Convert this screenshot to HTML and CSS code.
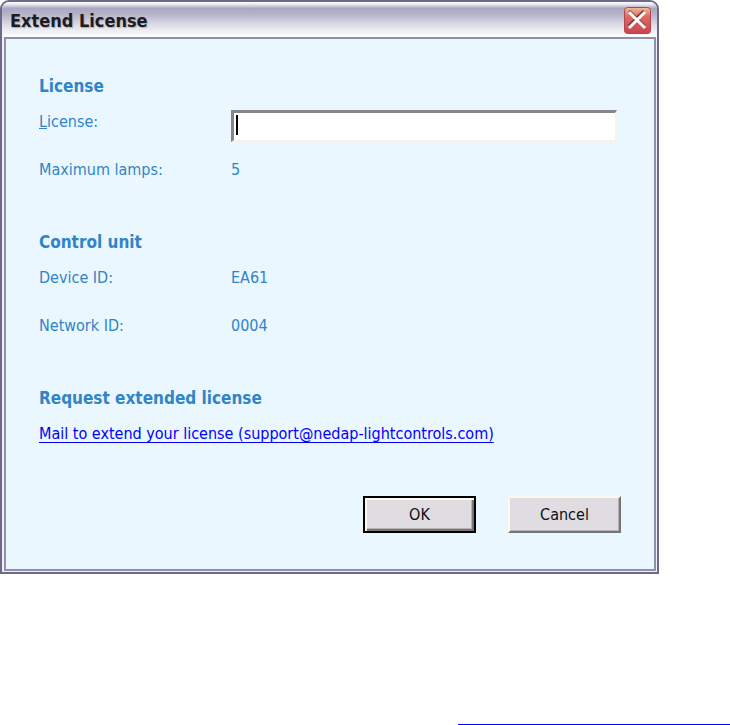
FILE: index.html
```html
<!DOCTYPE html>
<html lang="en">
<head>
  <meta charset="utf-8">
  <title>Extend License</title>
  <link rel="stylesheet" href="styles.css">
</head>
<body>
  <form class="dialog">
    <div class="titlebar">
      <h1>Extend License</h1>
      <button type="button" class="close" aria-label="Close">
        <svg viewBox="0 0 27 27" width="27" height="27">
          <defs>
            <linearGradient id="red" x1="0" y1="0" x2="0" y2="1">
              <stop offset="0" stop-color="#f2bd9c"/>
              <stop offset=".35" stop-color="#dc6a62"/>
              <stop offset="1" stop-color="#c94450"/>
            </linearGradient>
          </defs>
          <rect x="0.5" y="0.5" width="26" height="26" rx="3" fill="url(#red)" stroke="#b5434c"/>
          <path d="M5 4L20 19M20 4L5 19" stroke="#6e3038" stroke-width="3"/>
          <path d="M5 5L21 21M21 5L5 21" stroke="#fff" stroke-width="3"/>
        </svg>
      </button>
    </div>
    <div class="content">
      <section>
        <h2>License</h2>
        <div class="row input-row">
          <label for="license"><u>L</u>icense:</label>
          <div class="field">
            <input type="text" id="license" name="license">
            <span class="caret"></span>
          </div>
        </div>
        <div class="row">
          <span>Maximum lamps:</span>
          <span>5</span>
        </div>
      </section>
      <section>
        <h2>Control unit</h2>
        <div class="row">
          <span>Device ID:</span>
          <span>EA61</span>
        </div>
        <div class="row">
          <span>Network ID:</span>
          <span>0004</span>
        </div>
      </section>
      <section>
        <h2>Request extended license</h2>
        <a href="mailto:support@nedap-lightcontrols.com">Mail to extend your license (support@nedap-lightcontrols.com)</a>
      </section>
      <div class="buttons">
        <button type="submit" class="btn default">OK</button>
        <button type="button" class="btn">Cancel</button>
      </div>
    </div>
  </form>
  <div class="link-line"></div>
</body>
</html>
```
FILE: styles.css
```css
* {
    box-sizing: border-box;
}
body {
    margin: 0;
    background: #fff;
    color: #3084c8;
    font-family: Tahoma, "DejaVu Sans Condensed", "DejaVu Sans", sans-serif;
    font-size: 16px;
    line-height: 24px;
}
.dialog {
    margin-right: 71px;
    border: 2px solid #6b6a88;
    border-radius: 9px 9px 0 0;
    background: #f0eff5;
    padding: 0 1px 1px 2px;
}
.titlebar {
    display: flex;
    align-items: center;
    justify-content: space-between;
    height: 35px;
    margin: 0 -1px 0 -2px;
    padding: 2px 6px 0 8px;
    border-radius: 7px 7px 0 0;
    background: linear-gradient(#fff 0, #e2e2ec 8%, #a9a8c2 18%, #b4b3c9 35%, #dcdce6 65%, #fff 100%);
}
h1 {
    margin: 0;
    color: #1c1c22;
    font-size: 18px;
    text-shadow: 1px 1px 1px #aaaabb;
}
.close {
    width: 27px;
    height: 27px;
    padding: 0;
    border: 0;
    background: none;
}
.close svg {
    display: block;
}
.content {
    border: 2px solid #9090aa;
    background: #ebf7ff;
    padding: 35px 33px 36px;
}
section {
    margin-bottom: 48px;
}
h2 {
    margin: 0 0 12px;
    font-size: 17px;
    line-height: 24px;
}
.row {
    display: grid;
    grid-template-columns: 192px 1fr;
    margin-bottom: 24px;
}
.input-row {
    margin-bottom: 16px;
}
.field {
    position: relative;
    height: 32px;
    margin-right: 4px;
}
.field input {
    display: block;
    width: 100%;
    height: 32px;
    padding: 0 6px;
    border: 2px solid;
    border-width: 3px 2px 2px 3px;
    border-color: #868686 #f8f3e4 #f8f3e4 #868686;
    background: #fff;
    font: inherit;
    outline: 0;
}
.caret {
    position: absolute;
    left: 5px;
    top: 5px;
    width: 2px;
    height: 20px;
    background: #000;
}
a {
    color: #0000ff;
    text-underline-offset: 3px;
}
.buttons {
    display: flex;
    justify-content: flex-end;
    gap: 32px;
    margin-top: 50px;
}
.btn {
    width: 113px;
    height: 37px;
    padding: 0;
    border: 2px solid;
    border-color: #fbf8ef #77756f #77756f #fbf8ef;
    background: #dfdde2;
    box-shadow: inset -1px -1px 0 #b5b3b8;
    color: #111;
    font: inherit;
}
.default {
    border-color: #000;
    box-shadow: inset 2px 2px 0 #fbf8ef, inset -2px -2px 0 #77756f, inset -3px -3px 0 #b5b3b8;
}
.link-line {
    margin: 150px 0 0 458px;
    height: 1px;
    background: #0000ff;
}
```
